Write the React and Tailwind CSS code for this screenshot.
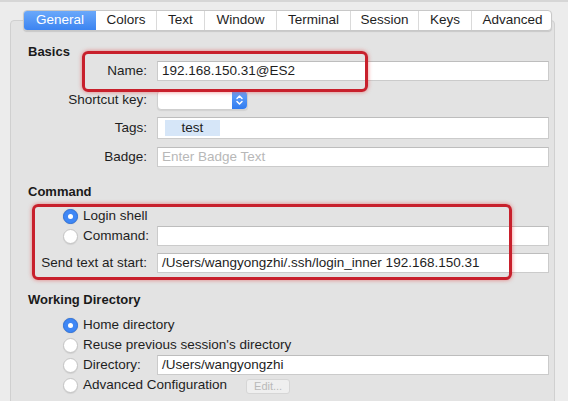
import React from "react";

const font = { fontFamily: '"Liberation Sans", Arial, sans-serif' };

function Radio({ on }) {
  return on ? (
    <div className="w-[15px] h-[15px] rounded-full bg-[#3f87f5] border border-[#2f74e0] flex items-center justify-center shrink-0 shadow-[0_0_1px_rgba(0,0,0,0.3)]">
      <div className="w-[5px] h-[5px] rounded-full bg-white" />
    </div>
  ) : (
    <div className="w-[15px] h-[15px] rounded-full bg-white border border-[#c4c4c4] shrink-0 shadow-[0_1px_1px_rgba(0,0,0,0.08)]" />
  );
}

function Input({ children, className = "", h = "h-[20px]" }) {
  return (
    <div
      className={`${h} w-[392px] bg-white border border-[#cbcbcb] border-t-[#bdbdbd] flex items-center pl-[4px] text-[13.5px] text-[#1e1e1e] ${className}`}
    >
      {children}
    </div>
  );
}

function Label({ children }) {
  return (
    <div className="w-[136px] text-right text-[13.5px] text-[#1e1e1e] shrink-0">{children}</div>
  );
}

const tabs = [
  ["General", 72],
  ["Colors", 60],
  ["Text", 48],
  ["Window", 72],
  ["Terminal", 74],
  ["Session", 68],
  ["Keys", 53],
  ["Advanced", 82],
];

export default function App() {
  return (
    <div className="relative w-[568px] h-[401px] overflow-hidden bg-[#ececec]" style={font}>
      <div className="h-[2px] bg-[#d6d6d6]" />
      <div className="ml-[10px] mt-[18px] w-[545px] h-[400px] bg-[#e3e3e3] border border-[#d0d0d0] rounded-[4px]">
        {/* tab bar */}
        <div className="-mt-[11px] ml-[12px] flex h-[21px] rounded-[4px] bg-white border border-[#c8c8c8] shadow-[0_1px_1px_rgba(0,0,0,0.12)] w-[529px] overflow-hidden">
          {tabs.map(([t, w], i) => (
            <div
              key={t}
              style={{ width: w }}
              className={
                i === 0
                  ? "flex items-center justify-center text-[13.5px] text-white bg-gradient-to-b from-[#6aa8fa] to-[#3c84f1] shrink-0"
                  : i === 1
                  ? "flex items-center justify-center text-[13.5px] text-[#1e1e1e] shrink-0"
                  : "flex items-center justify-center text-[13.5px] text-[#1e1e1e] border-l border-[#dadada] shrink-0"
              }
            >
              {t}
            </div>
          ))}
        </div>

        {/* Basics */}
        <div className="mt-[13px] h-[16px] pl-[17px] text-[13px] font-bold text-[#1a1a1a] leading-[16px]">Basics</div>
        <div className="mt-[1px] h-[20px] flex items-center gap-[10px]">
          <Label>Name:</Label>
          <Input>192.168.150.31@ES2</Input>
        </div>
        <div className="mt-[9px] h-[20px] flex items-center gap-[10px]">
          <Label>Shortcut key:</Label>
          <div className="h-[20px] w-[91px] bg-white rounded-[4px] border border-[#cfcfcf] flex justify-end shadow-[0_1px_1px_rgba(0,0,0,0.08)]">
            <div className="w-[15px] h-full rounded-r-[4px] bg-gradient-to-b from-[#68a6fb] to-[#2f7bf0] flex items-center justify-center">
              <svg width="9" height="12" viewBox="0 0 9 12" fill="none" stroke="white" strokeWidth="1.5" strokeLinecap="round" strokeLinejoin="round">
                <path d="M2 4.5 L4.5 2 L7 4.5" />
                <path d="M2 7.5 L4.5 10 L7 7.5" />
              </svg>
            </div>
          </div>
        </div>
        <div className="mt-[7px] h-[22px] flex items-center gap-[10px]">
          <Label>Tags:</Label>
          <Input h="h-[22px]" className="pl-[7px]">
            <div className="h-[16px] w-[55px] bg-[#d6e6f8] flex items-center justify-center text-[13.5px] text-[#1e1e1e]">test</div>
          </Input>
        </div>
        <div className="mt-[8px] h-[20px] flex items-center gap-[10px]">
          <Label>Badge:</Label>
          <Input>
            <span className="text-[#b8b8b8]">Enter Badge Text</span>
          </Input>
        </div>

        {/* Command */}
        <div className="mt-[17px] h-[16px] pl-[17px] text-[13px] font-bold text-[#1a1a1a] leading-[16px]">Command</div>
        <div className="mt-[6px] h-[20px] flex items-center pl-[52px] gap-[5px] text-[13.5px] text-[#1e1e1e]">
          <Radio on />
          <span>Login shell</span>
        </div>
        <div className="h-[20px] flex items-center gap-[10px]">
          <div className="w-[136px] flex items-center pl-[52px] gap-[5px] text-[13.5px] text-[#1e1e1e] shrink-0">
            <Radio />
            <span>Command:</span>
          </div>
          <Input />
        </div>
        <div className="mt-[7px] h-[20px] flex items-center gap-[10px]">
          <Label>Send text at start:</Label>
          <Input>/Users/wangyongzhi/.ssh/login_inner 192.168.150.31</Input>
        </div>

        {/* Working Directory */}
        <div className="mt-[19px] h-[16px] pl-[17px] text-[13px] font-bold text-[#1a1a1a] leading-[16px]">Working Directory</div>
        <div className="mt-[7px] h-[20px] flex items-center pl-[52px] gap-[5px] text-[13.5px] text-[#1e1e1e]">
          <Radio on />
          <span>Home directory</span>
        </div>
        <div className="h-[20px] flex items-center pl-[52px] gap-[5px] text-[13.5px] text-[#1e1e1e]">
          <Radio />
          <span>Reuse previous session's directory</span>
        </div>
        <div className="h-[20px] flex items-center gap-[10px]">
          <div className="w-[136px] flex items-center pl-[52px] gap-[5px] text-[13.5px] text-[#1e1e1e] shrink-0">
            <Radio />
            <span>Directory:</span>
          </div>
          <Input>/Users/wangyongzhi</Input>
        </div>
        <div className="h-[20px] flex items-center pl-[52px] gap-[5px] text-[13.5px] text-[#1e1e1e]">
          <Radio />
          <span>Advanced Configuration</span>
          <div className="ml-[14px] mt-[3px] h-[15px] w-[44px] bg-[#efefef] border border-[#d6d6d6] rounded-[3px] flex items-center justify-center text-[11px] text-[#b9b9b9]">
            Edit...
          </div>
        </div>
      </div>

      {/* annotation boxes */}
      <div className="absolute left-[82px] top-[51px] w-[286px] h-[41px] rounded-[6px] border-[3px] border-[#c8202c] shadow-[0_0_4px_rgba(230,40,40,0.55)]" />
      <div className="absolute left-[32px] top-[204px] w-[480px] h-[76px] rounded-[6px] border-[3px] border-[#c8202c] shadow-[0_0_4px_rgba(230,40,40,0.55)]" />
    </div>
  );
}
